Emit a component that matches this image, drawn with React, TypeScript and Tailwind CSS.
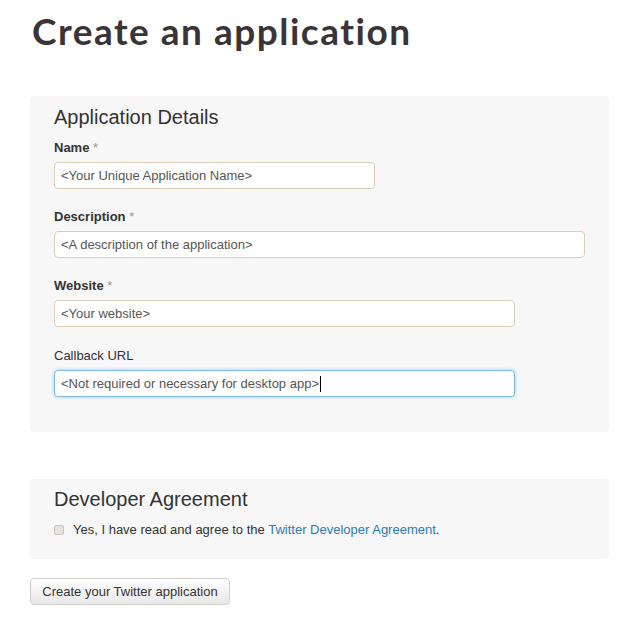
import React from "react";

const labelCls = "block text-[13px] leading-[18px] text-[#333] mb-[5px]";
const inputBase =
  "h-[27px] rounded-[4px] bg-white px-[6px] flex items-center text-[13px] text-[#555] border";

function Field({
  label,
  required,
  bold = true,
  value,
  width,
  focused,
  mt,
}: {
  label: string;
  required?: boolean;
  bold?: boolean;
  value: string;
  width: string;
  focused?: boolean;
  mt?: string;
}) {
  return (
    <div className={mt}>
      <div className={`${labelCls} ${bold ? "font-bold" : "font-normal"}`}>
        {label}
        {required && <span className="font-normal text-[#999]"> *</span>}
      </div>
      <div
        className={`${inputBase} ${width} ${
          focused
            ? "border-[#7fb9ea] shadow-[0_0_3px_1px_rgba(130,190,240,0.45)]"
            : "border-[#ddcdb6]"
        }`}
      >
        <span>{value}</span>
        {focused && <span className="inline-block w-px h-[16px] bg-black ml-px" />}
      </div>
    </div>
  );
}

export default function App() {
  return (
    <div
      className="w-[633px] h-[634px] bg-white px-[30px] pt-[7px]"
      style={{ fontFamily: '"Liberation Sans", Arial, sans-serif' }}
    >
      <h1
        className="text-[37px] leading-[48px] font-bold text-[#3b3436] pl-[2px] tracking-[1.5px]"
        style={{ fontFamily: 'Lato, "Open Sans", sans-serif' }}
      >
        Create an application
      </h1>

      <div className="mt-[41px] w-[579px] rounded-[4px] bg-[#f7f7f7] pl-[24px] pt-[9px] pb-[35px]">
        <h2 className="text-[20px] leading-[24px] text-[#333] font-normal mb-[10px]">
          Application Details
        </h2>
        <Field label="Name" required value="<Your Unique Application Name>" width="w-[321px]" />
        <Field
          label="Description"
          required
          value="<A description of the application>"
          width="w-[531px]"
          mt="mt-[19px]"
        />
        <Field label="Website" required value="<Your website>" width="w-[461px]" mt="mt-[19px]" />
        <Field
          label="Callback URL"
          bold={false}
          value="<Not required or necessary for desktop app>"
          width="w-[461px]"
          focused
          mt="mt-[20px]"
        />
      </div>

      <div className="mt-[47px] w-[579px] rounded-[4px] bg-[#f7f7f7] pl-[24px] pt-[8px] pb-[20px]">
        <h2 className="text-[20px] leading-[24px] text-[#333] font-normal mb-[10px]">
          Developer Agreement
        </h2>
        <div className="flex items-center text-[13px] leading-[18px] text-[#333]">
          <span className="inline-block w-[10px] h-[10px] rounded-[2px] border border-[#c9c3bb] bg-[#e6e4e2] mr-[9px]" />
          <span>
            Yes, I have read and agree to the{" "}
            <span className="text-[#2b7bb9]">Twitter Developer Agreement</span>.
          </span>
        </div>
      </div>

      <button className="mt-[19px] h-[27px] w-[200px] rounded-[4px] border border-[#d3cfc8] bg-gradient-to-b from-[#ffffff] to-[#e8e8e8] text-[13px] text-[#333] flex items-center justify-center">
        Create your Twitter application
      </button>
    </div>
  );
}
